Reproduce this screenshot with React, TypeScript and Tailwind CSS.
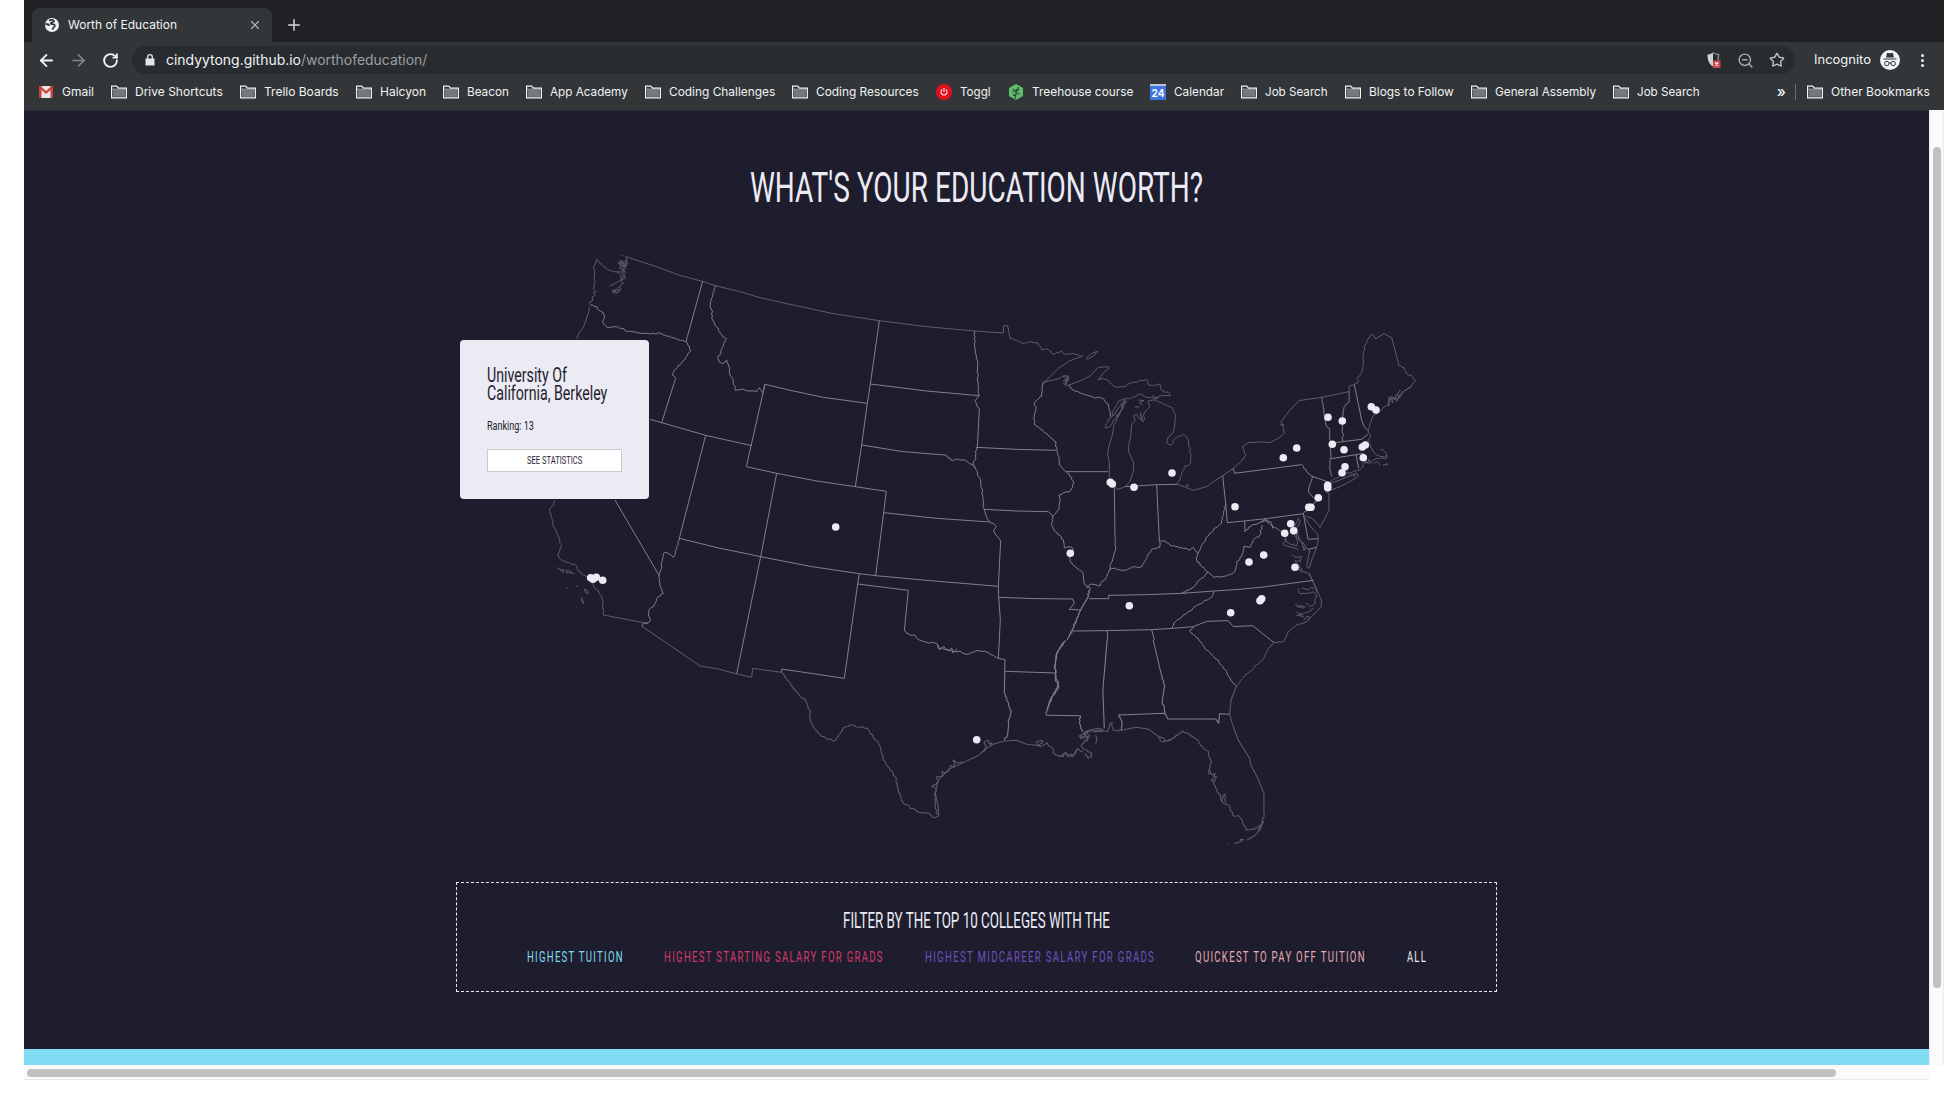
import { useLayoutEffect, useRef, useState, type ReactNode } from "react";
import { ArrowLeft, ArrowRight, Plus, RotateCw, Star, X, ZoomOut } from "lucide-react";

/** Single line of text whose glyphs are stretched to fill the width of its box. */
function FitText({ className, children }: { className: string; children: ReactNode }) {
  const box = useRef<HTMLSpanElement>(null);
  const text = useRef<HTMLSpanElement>(null);
  const [scale, setScale] = useState(1);
  useLayoutEffect(() => {
    if (box.current && text.current) {
      setScale(box.current.clientWidth / text.current.offsetWidth);
    }
  }, []);
  return (
    <span ref={box} className={"block shrink-0 whitespace-nowrap " + className}>
      <span ref={text} className="inline-block origin-left" style={{ transform: `scaleX(${scale})` }}>
        {children}
      </span>
    </span>
  );
}

/* ---------- Browser chrome ---------- */

function FolderIcon() {
  return (
    <svg width="16" height="14" viewBox="0 0 16 14" fill="none" className="shrink-0">
      <path d="M.6 12.9V1.1h5.2l1.600 2h8v9.800z" stroke="#f1f3f4" strokeWidth="1.200" />
      <path d="M2 5h12v6.800H2z" fill="#75797c" />
      <path d="M1 4.200h14" stroke="#c9cbcd" strokeWidth=".8" />
    </svg>
  );
}

function GmailIcon() {
  return (
    <svg width="16" height="14" viewBox="0 0 16 14" className="shrink-0">
      <path d="M1 1h14v12H1z" fill="#e8e6e6" />
      <path d="M1 1h2.500v12H1zM12.500 1H15v12h-2.500z" fill="#c5443c" />
      <path d="M1.800 1.800 8 7.500l6.200-5.700" fill="none" stroke="#d0453c" strokeWidth="2.300" />
    </svg>
  );
}

function TogglIcon() {
  return (
    <svg width="16" height="16" viewBox="0 0 16 16" className="shrink-0">
      <circle cx="8" cy="8" r="8" fill="#e01020" />
      <path d="M6.200 5.600a3 3 0 1 0 3.600 0M8 4v4" fill="none" stroke="#fbd5d8" strokeWidth="1.200" />
    </svg>
  );
}

function TreehouseIcon() {
  return (
    <svg width="16" height="16" viewBox="0 0 16 16" className="shrink-0">
      <path d="M8 0l7 4v8l-7 4-7-4V4z" fill="#5fbf6b" />
      <path d="M7 15l1-5-3 1.500M8 10l.5-5M8 8l3-3M10 6V3M8 9l4 1M5 5l3 3M4 8h2" fill="none" stroke="#2f4a38" strokeWidth="1.200" />
    </svg>
  );
}

function CalendarIcon() {
  return (
    <span className="flex h-4 w-4 shrink-0 items-center justify-center border-t-2 border-[#b9c4da] bg-[#3f74e0] text-[10px] leading-none font-bold text-white">
      24
    </span>
  );
}

const bookmarks: { icon: ReactNode; label: string; width: string }[] = [
  { icon: <GmailIcon />, label: "Gmail", width: "w-[32px]" },
  { icon: <FolderIcon />, label: "Drive Shortcuts", width: "w-[88px]" },
  { icon: <FolderIcon />, label: "Trello Boards", width: "w-[75px]" },
  { icon: <FolderIcon />, label: "Halcyon", width: "w-[46px]" },
  { icon: <FolderIcon />, label: "Beacon", width: "w-[42px]" },
  { icon: <FolderIcon />, label: "App Academy", width: "w-[78px]" },
  { icon: <FolderIcon />, label: "Coding Challenges", width: "w-[106px]" },
  { icon: <FolderIcon />, label: "Coding Resources", width: "w-[103px]" },
  { icon: <TogglIcon />, label: "Toggl", width: "w-[31px]" },
  { icon: <TreehouseIcon />, label: "Treehouse course", width: "w-[101px]" },
  { icon: <CalendarIcon />, label: "Calendar", width: "w-[50px]" },
  { icon: <FolderIcon />, label: "Job Search", width: "w-[63px]" },
  { icon: <FolderIcon />, label: "Blogs to Follow", width: "w-[85px]" },
  { icon: <FolderIcon />, label: "General Assembly", width: "w-[101px]" },
  { icon: <FolderIcon />, label: "Job Search", width: "w-[63px]" },
];

function TabStrip() {
  return (
    <div className="flex h-[42px] items-end bg-[#202124] pl-2">
      <div className="flex h-[34px] w-[240px] items-center rounded-t-lg bg-[#323639] pr-[10px] pl-[13px]">
        <svg width="14" height="14" viewBox="0 0 14 14" className="mr-[9px] shrink-0">
          <circle cx="7" cy="7" r="7" fill="#f1f3f4" />
          <path d="M4 2.500C6 1.500 9 1.500 9 3.200 9 4.500 6 3.500 5.800 5.200s3.500 0 4 2-2 1.800-2.300 4.500M.5 6c2 0 3.500.6 3.800 1.800" fill="none" stroke="#323639" strokeWidth="1.800" />
        </svg>
        <FitText className="w-[109px] text-[12px] leading-4 text-[#f1f3f4]">Worth of Education</FitText>
        <X size={14} strokeWidth={2} className="ml-auto text-[#b6b9bc]" />
      </div>
      <Plus size={18} strokeWidth={2} className="mb-2 ml-[13px] text-[#d5d7d9]" />
    </div>
  );
}

function Toolbar() {
  return (
    <div className="flex h-8 items-start bg-[#323639] pt-1">
      <div className="flex h-7 w-[108px] items-center pl-[13px]">
        <ArrowLeft size={19} strokeWidth={2.300} className="shrink-0 text-[#f1f3f4]" />
        <ArrowRight size={19} strokeWidth={2} className="ml-[13px] shrink-0 text-[#85898c]" />
        <RotateCw size={17} strokeWidth={2.700} className="ml-[14px] shrink-0 text-[#f1f3f4]" />
      </div>
      <div className="flex h-7 w-[1663px] items-center rounded-full bg-[#282c2f] pl-[13px]">
        <svg width="10" height="12" viewBox="0 0 10 12" className="mr-[11px] shrink-0">
          <path d="M.5 4.500h9v7h-9z" fill="#e3e5e7" />
          <path d="M2.700 5V3a2.300 2.300 0 0 1 4.600 0v2" fill="none" stroke="#e3e5e7" strokeWidth="1.300" />
        </svg>
        <FitText className="w-[261px] text-[14px] leading-5 text-[#9aa0a6]">
          <span className="text-[#f1f3f4]">cindyytong.github.io</span>/worthofeducation/
        </FitText>
        <div className="ml-auto flex items-center gap-[15px] pr-[10px]">
          <svg width="16" height="18" viewBox="0 0 16 18" className="ml-px">
            <path d="M7 1.500C5 3 3 3.500 1.500 3.500c0 6 1.500 9.500 5.500 12z" fill="#cfd1d3" />
            <path d="M7 1.500c2 1.500 4 2 5.500 2 0 2.500 0 4-.5 6" fill="none" stroke="#8f9396" strokeWidth="1.400" />
            <path d="M7 9.500h7.500V17H7z" fill="#d3454a" />
            <path d="M9.200 11.500l3 3m0-3l-3 3" stroke="#fff" strokeWidth="1.200" />
          </svg>
          <ZoomOut size={17} strokeWidth={2} className="text-[#a9acaf]" />
          <Star size={16} strokeWidth={2} className="text-[#c4c6c8]" />
        </div>
      </div>
      <div className="flex h-7 items-center pl-[19px] text-[#f1f3f4]">
        <FitText className="w-[57px] text-[12.500px] leading-5">Incognito</FitText>
        <svg width="20" height="20" viewBox="0 0 20 20" className="ml-[9px]">
          <circle cx="10" cy="10" r="10" fill="#f1f3f4" />
          <path d="M3.500 9h13M6.800 7l.8-3.500 2.400.6 2.400-.6.8 3.500z" fill="#323639" stroke="#323639" strokeWidth="1.200" />
          <circle cx="6.800" cy="13.500" r="2.200" fill="none" stroke="#323639" />
          <circle cx="13.200" cy="13.500" r="2.200" fill="none" stroke="#323639" />
          <path d="M9 13.200h2" stroke="#323639" />
        </svg>
        <span className="ml-[21px] flex flex-col gap-[2px]">
          <span className="h-[3px] w-[3px] rounded-full bg-[#f1f3f4]" />
          <span className="h-[3px] w-[3px] rounded-full bg-[#f1f3f4]" />
          <span className="h-[3px] w-[3px] rounded-full bg-[#f1f3f4]" />
        </span>
      </div>
    </div>
  );
}

function BookmarksBar() {
  return (
    <div className="flex h-9 items-center gap-[17px] bg-[#323639] pl-[14px] text-[12px] leading-4 text-[#f1f3f4]">
      {bookmarks.map((b, i) => (
        <div key={i} className="flex items-center gap-2">
          {b.icon}
          <FitText className={b.width}>{b.label}</FitText>
        </div>
      ))}
      <div className="ml-auto flex items-center pr-[14px]">
        <span className="mr-[9px] text-[15px] font-medium">»</span>
        <span className="mr-[11px] h-4 w-px bg-[#6a6e71]" />
        <FolderIcon />
        <FitText className="ml-2 w-[99px]">Other Bookmarks</FitText>
      </div>
    </div>
  );
}

/* ---------- Map ---------- */

/** Turns "x y x y ..." into a path that wanders around each segment like a river bank. */
function meander(source: string, amplitude: number): string {
  const n = source.trim().split(/\s+/).map(Number);
  let d = `M${n[0]} ${n[1]}`;
  let seed = 3;
  for (let i = 2; i < n.length; i += 2) {
    const [x0, y0, x1, y1] = [n[i - 2], n[i - 1], n[i], n[i + 1]];
    const length = Math.hypot(x1 - x0, y1 - y0) || 1;
    const steps = Math.max(1, Math.round(length / 6));
    for (let s = 1; s <= steps; s++) {
      seed = (seed * 73 + 41) % 1009;
      const offset = s === steps ? 0 : (seed / 1009 - 0.5) * 2 * amplitude;
      const x = x0 + ((x1 - x0) * s) / steps + ((y0 - y1) / length) * offset;
      const y = y0 + ((y1 - y0) * s) / steps + ((x1 - x0) / length) * offset;
      d += `L${x.toFixed(1)} ${y.toFixed(1)}`;
    }
  }
  return d;
}

type Region = { transform: string; coast: string; wildCoast: string[]; borders: string; rivers: string[] };

const regions: Region[] = [
  {
    // West
    transform: "translate(440 240) scale(.33333)",
    coast:
      "M545 45l4 2M562 72L558 50 640 77 720 106 786 124 826 137 900 155M448 200L446 215 438 240 430 262 418 278 410 297M490 1125L610 1148 625 1148M607 1160L700 1223 780 1278 835 1287 890 1302M350 983L360 988 370 998 372 990 360 989M378 993L385 990 398 999 380 998ZM400 1000L405 1002M380 1042L385 1048M408 1038l5 2M433 1047L443 1053 445 1061 437 1058ZM424 1073L432 1090 427 1088Z",
    wildCoast: [
      "452 195 450 185 458 182 456 172 463 168 460 158 468 155 460 147 463 130 464 100 461 85 470 58",
      "470 58 485 75 500 86 515 92 530 96 540 100",
      "343 780 342 795 330 805 331 820 340 845 342 862 356 890 358 908 365 915 357 938 356 950 362 958 385 967 408 976 415 990 425 1002 440 1010 455 1028 462 1040 475 1052 488 1080 490 1110 490 1125",
      "530 96 548 95 538 85 545 75 535 70 540 62 553 64 560 60 563 72 552 78 558 85 548 92 557 98 550 105 556 115 545 118 550 130 540 138 543 150 530 158 520 160 518 150 530 148 536 140",
      "540 66 548 72 556 68 560 78 546 84 554 92 548 100 542 108 548 120",
      "536 72 546 66 552 76 542 80 536 70 550 70 558 76 550 82",
      "510 140 522 130 538 124 546 112 556 104",
      "518 156 526 150 538 152 532 160 522 154",
    ],
    borders:
      "M788 124L742 290 738 306M702 430L665 548M968 458L975 433M630 538L665 548 797 586 935 617M797 586L718 895M525 780L657 1006M718 895L840 925 900 937",
    rivers: [
      "452 195 470 200 478 212 490 218 494 232 488 245 495 256 508 263 530 260 545 265 560 274 585 275 620 280 660 280 700 294 738 306",
      "738 306 748 318 752 332 735 358 720 375 703 390 697 405 708 415 702 430",
      "826 137 810 198 818 215 815 235 830 262 848 290 860 297 850 318 840 345 833 355 838 366 850 370 860 360 868 385 870 405 880 422 887 452 905 448 930 453 950 455 958 444 968 458",
      "718 895 705 945 700 952 685 940 670 940 667 960 662 990 657 1006 660 1030 670 1060 650 1075 642 1098 628 1108 625 1125 632 1140 622 1150 610 1150 607 1160",
    ],
  },
  {
    // Plains
    transform: "translate(740 290) scale(.33333)",
    coast:
      "M0 5L60 23 150 43 280 71 418 92 560 110 703 123 790 129 791 107 803 107 810 146M1028 198L990 212 955 235 915 275M-10 1152L35 1162 38 1135 125 1147",
    wildCoast: ["810 146 830 150 848 160 870 154 895 160 905 180 920 176 940 193 965 183 972 191 1000 190 1028 198"],
    borders:
      "M418 92L391 282 382 340 365 465 346 590M75 283L160 303 250 322 382 340M75 283L19 530 110 550 230 573 346 590 439 604M391 282L560 303 717 317M365 465L490 485 615 495M110 550L62 800-10 1152M439 604L407 857M430 668L590 685 750 696M0 787L62 800 210 829 358 851 407 857 560 871 775 889M707 472L830 478 950 481M733 658L830 663 925 665 938 678M718 355L712 472M782 752L775 889 776 920 781 990 775 1105M358 851L353 882 313 1165 125 1137 125 1147M353 882L505 901 493 1022M775 1105L795 1109M776 922L890 926 998 927 1003 940 988 958 1020 960M978 545L1105 545M795 1144L945 1149",
    rivers: [
      "615 495 638 512 650 507 675 510 695 523 705 533",
      "703 123 706 180 712 210 713 270 718 317 705 335 718 355",
      "712 472 706 485 708 505 700 520 712 545 722 575 728 620 733 658 745 690 770 710 760 725 782 752",
      "915 275 907 282 906 318 883 338 888 350 883 375 882 402 920 430 948 455 950 481 957 500 958 525 978 545 995 562 1000 580 992 602 957 615 960 632 955 660 938 678 935 700 940 715 970 750 975 775 990 770 1000 780 990 800 990 815 1030 850 1035 885 1050 893",
      "493 1022 510 1036 525 1035 535 1048 560 1057 590 1060 600 1075 625 1080 640 1083 660 1083 678 1093 705 1084 735 1083 755 1095 775 1105",
      "590 1060 598 1078 612 1070 626 1082 636 1074 638 1088 650 1076",
    ],
  },
  {
    // Great Lakes and Ohio valley
    transform: "translate(980 310) scale(.33333)",
    coast:
      "M188 217L215 211 240 205M265 226L300 213 330 198 355 172 385 170 388 174 370 188 355 210M318 145L335 130 352 124 340 138 322 148ZM435 275L420 310 402 345 397 375 388 405 383 430 388 460 388 500 400 530 415 538 435 530 450 515 461 480 460 455 445 425 447 400 452 380 455 345M475 270L492 272 478 278 488 285M465 292L478 290M592 523L620 533 640 541 680 530 700 515 728 497M620 530l2-8 3 8",
    wildCoast: [
      "240 205 250 198 265 198 262 215 250 222 265 226",
      "248 200 262 205 250 212 268 206 256 224 262 196",
      "355 210 370 204 385 212 405 230 430 230 460 217 500 209 507 225 540 222 545 240 570 250 570 258 545 257 520 265 500 262 485 252 455 263 430 268 415 275 400 300 395 322",
      "392 320 380 340 375 353 390 350 400 330 415 315 430 290 440 272",
      "400 318 412 300 424 280 436 268 424 300 408 322",
      "455 345 465 330 460 318 470 312 478 325 490 335 492 312 500 300 510 290 505 272 525 270 545 278 575 292 587 312 585 345 578 370 562 385 562 400 575 405 585 385 610 373 622 385 632 430 630 462 615 468 605 495 592 523",
      "480 312 486 330 482 308",
      "515 258 535 264 525 270",
    ],
    borders:
      "M435 530L530 524 592 523M530 524L538 692M403 535L405 680M328 866L386 866 386 856 500 854 605 850 703 843 780 838M278 963L380 962 515 959 578 955 640 950M380 962L383 975 382 990M515 959L523 990M640 950L680 934 745 932 760 950 818 947 882 998M728 497L737 580 742 638",
    rivers: [
      "265 226 280 240 330 258 370 266 385 285 390 305 392 320",
      "405 680 407 720 398 750 388 780 380 800 362 820 360 828 335 822 320 835",
      "388 780 400 775 430 782 460 770 485 770 500 745 515 718 538 712 538 692 555 692 575 708 605 713 630 720 640 712 652 730 650 750 665 770 685 787",
      "330 833 325 860 300 905 275 960 262 990",
      "327 840 322 866 303 900 278 958 266 984",
      "578 955 580 940 610 915 650 887 695 862 703 843",
      "605 850 640 832 655 812 685 787 705 802 740 798 765 783 770 755 785 740 792 708 810 712 820 690 840 675 847 645",
      "640 950 630 965 655 985 680 1020 710 1048 740 1085 760 1120 770 1128",
      "737 580 725 640 690 670 668 700 655 730",
    ],
  },
  {
    // Atlantic seaboard
    transform: "translate(1180 310) scale(.33333)",
    coast:
      "M128 497L160 475 185 453 197 435 187 410 205 398 240 396 270 398 295 385 313 370 310 352 302 342 312 346 303 338 305 333 330 300 357 272 425 262 507 245 508 228 523 224M572 73L580 75 586 87 612 71 635 83 645 120 657 167M436 545L447 550 447 600 435 625 420 652 412 640 395 625 380 618M452 520L480 510 510 497 530 490 536 498 515 512 480 530 445 543M370 612L385 640 400 660 413 672 415 690 410 712 395 750 388 775 380 770 385 740 390 720M385 790L400 815 415 850 424 870 424 890 400 915 378 937 350 945 325 965 312 995 282 998M388 790L405 830 412 850",
    wildCoast: [
      "523 224 535 215 530 205 545 188 550 155 550 125 560 95 572 73",
      "657 167 672 172 680 192 695 196 707 213 695 228 670 245 655 265 640 265 628 275 630 285 615 290 600 303 582 315 570 340 565 365 572 380 563 390",
      "695 228 680 240 665 248 658 262 648 254 645 270 632 258 640 278 626 262 625 285",
      "660 240 652 256 662 258 650 274 640 262 628 268",
      "563 390 568 400 580 425 595 437 615 440 620 430 608 418 600 420",
      "620 435 620 445 590 445 570 460 555 457 548 470 538 480 500 490 470 505 452 515",
      "555 445 560 460 566 448 572 458",
      "580 462 592 456 600 466",
      "608 466 622 464 618 458",
      "513 498 530 490 522 500",
      "390 720 370 712 365 695 350 680 345 650 355 625 360 632 350 655 358 690 372 700",
      "368 700 380 712 372 722 366 708",
      "315 675 320 690 308 702 330 710 350 715 355 722",
      "312 688 328 700 350 708 352 692 342 672",
      "335 735 350 742 364 738 362 756 345 752 358 766 366 780 345 778 370 785 385 790",
      "365 835 385 838 395 830 402 838",
      "355 835 358 850 380 850 400 845 410 855 405 880 390 890 378 880",
      "345 885 375 890 370 895 350 890",
      "350 908 365 912 370 920 350 916 385 905 400 895",
      "372 930 380 920 390 922 376 937",
      "282 998 265 1015 252 1045 235 1062 190 1102 170 1128",
    ],
    borders:
      "M160 475L163 490 365 464M400 500L450 518M142 638L250 627 370 611 384 688 415 686M385 718l24-6M451 400L488 395 545 388 563 373M523 224L545 330 552 350 565 362M453 446L528 434 550 430 556 440M528 434L536 475M194 633L195 665M180 838L250 831 400 811",
    rivers: [
      "365 464 385 490 400 500 388 530 388 550 400 563 413 565 395 590 370 610",
      "425 262 432 300 438 345 448 355 453 440 450 480 456 500",
      "507 245 508 275 492 292 487 340 488 395",
      "195 665 215 645 240 638 255 628 272 635 278 655",
      "240 638 258 630 272 645 290 655 305 665",
    ],
  },
  {
    // Gulf coast and Florida
    transform: "translate(740 640) scale(.35714 .33333)",
    coast:
      "M557 527L555 500 547 460 555 420 585 388 625 368 665 348 690 325 710 312 740 303 775 301 800 312 838 317M1068 271L1110 262 1145 268 1172 290M1467 520L1467 460 1450 415 1430 375 1427 355 1395 300 1378 250 1371 222 1375 180 1390 138M1466 543L1455 570 1440 588 1420 600M1462 548L1450 575M1412 600L1400 598 1404 604 1383 611M1365 612L1368 612M996 285l3 14-3 12M965 275l50-5M990 276l30-2",
    wildCoast: [
      "118 98 130 115 155 150 185 185 195 210 197 245 225 285 262 304 275 290 292 262 312 255 355 265 388 310 400 350 410 375 438 415 443 450 457 490 500 517 530 520 543 534 557 527",
      "553 524 547 500 544 462 550 448 537 440 550 432 556 418 550 410 568 408 565 394 580 396 590 376 600 380 596 360 606 368 624 366",
      "675 340 690 324 683 306 695 300 698 312 706 308 700 320",
      "838 317 848 302 830 305 840 320 860 308 878 330 876 338 895 350 910 338 930 350 945 325 960 335",
      "895 348 905 350 912 338 918 350 926 342 934 346 940 330",
      "955 318 960 325 985 340 985 350 975 355 965 340",
      "955 318 975 290 955 297 950 288 965 278 980 270 1000 265 1030 275 1036 250 1042 248 1045 270 1068 271",
      "950 288 962 292 970 284 960 280 972 276 980 288 970 306",
      "1172 290 1180 305 1200 302 1240 273 1275 295 1300 328 1312 335 1320 365 1312 400 1335 410 1325 428 1340 460 1355 490 1368 495 1382 528 1398 528 1418 570 1440 568 1460 555 1467 520",
      "1172 292 1185 294 1190 304 1205 298 1225 284",
      "1314 390 1322 404 1330 400 1324 424 1318 418",
      "1350 486 1352 466 1358 462 1360 490",
    ],
    borders:
      "M742 60L740 158M858 226L953 227M1028 0L1016 150 1020 265M1157 0L1180 105M1190 220L1060 225 1070 245 1068 271M1190 220L1198 237 1332 237 1340 250 1343 221 1371 223",
    rivers: [
      "740 158 750 185 760 215 752 250 750 280 740 300",
      "912 0 890 35 882 75 885 110 893 140 872 180 860 210 858 226",
      "908 4 887 38 884 75 882 108 889 140 870 178 862 210",
      "953 227 950 248 960 275",
      "1180 105 1190 140 1183 180 1190 220",
    ],
  },
];

const colleges: [number, number][] = [
  [590.7, 577.7], [593, 579.3], [596.3, 577.3], [602.7, 580.3], [835.7, 527], [1070.3, 553.3],
  [1110.3, 482.3], [1112.3, 484], [1134, 487.3], [1172, 473], [1129.3, 605.7], [1230.7, 612.7],
  [1235, 506.7], [1283.3, 457.7], [1296.7, 448], [1328, 417.3], [1342.3, 421], [1332.3, 444.3],
  [1344, 449.7], [1371.3, 406.7], [1376, 410], [1365.3, 445], [1362.3, 447], [1363.3, 457.7],
  [1345, 466.7], [1342, 472.7], [1327.7, 485.3], [1327.7, 487.7], [1318.3, 497.7], [1308.7, 507.3],
  [1311, 507.3], [1290.7, 523.7], [1293.7, 530.7], [1284.7, 533.3], [1249, 562], [1263.7, 555],
  [1295, 567.3], [1260, 600.7], [1261.7, 598.7], [976.7, 739.7],
];

function CollegeMap() {
  return (
    <svg width="1041" height="620" viewBox="456 240 1041 620" fill="none" className="block">
      {regions.map((r) => (
        <g key={r.transform} transform={r.transform}>
          <g stroke="#5d5c69" strokeWidth="3" strokeLinejoin="round">
            <path d={r.coast} />
            {r.wildCoast.map((s, i) => <path key={i} d={meander(s, 2.5)} />)}
          </g>
          <g stroke="#81808c" strokeWidth="3" strokeLinejoin="round">
            <path d={r.borders} />
            {r.rivers.map((s, i) => <path key={i} d={meander(s, 2.5)} />)}
          </g>
        </g>
      ))}
      {colleges.map(([x, y], i) => (
        <circle key={i} cx={x} cy={y} r="3.800" fill="#ecebf4" />
      ))}
    </svg>
  );
}

function CollegeCard() {
  return (
    <div className="absolute top-[100px] left-1 flex h-[159px] w-[189px] flex-col rounded bg-[#ecebf4] px-[27px] pt-[27px] text-[#1e1d2d]">
      <FitText className="h-[18px] w-[80px] text-[19.500px] leading-[18px]">University Of</FitText>
      <FitText className="h-[18px] w-[120px] text-[19.500px] leading-[18px]">California, Berkeley</FitText>
      <FitText className="mt-[15px] h-4 w-[47px] text-[12.500px] leading-4">Ranking: 13</FitText>
      <button className="mt-[15px] flex h-[23px] w-[135px] shrink-0 items-center justify-center border border-[#c9c9d2] bg-white">
        <FitText className="w-[55px] text-[11px] leading-4">SEE STATISTICS</FitText>
      </button>
    </div>
  );
}

const filters = [
  { label: "HIGHEST TUITION", style: "w-[97px] text-[#7edcf2]" },
  { label: "HIGHEST STARTING SALARY FOR GRADS", style: "w-[220px] text-[#d13b6b]" },
  { label: "HIGHEST MIDCAREER SALARY FOR GRADS", style: "w-[230px] text-[#6c52bd]" },
  { label: "QUICKEST TO PAY OFF TUITION", style: "w-[171px] text-[#e6a9b6]" },
  { label: "ALL", style: "w-[20px] text-[#ecebf4]" },
];

function Filters() {
  return (
    <section className="mt-[22px] flex h-[110px] w-[1041px] flex-col items-center border border-dashed border-[#ecebf4] pt-6">
      <FitText className="h-7 w-[267px] text-[21.500px] leading-7 text-[#ecebf4]">
        FILTER BY THE TOP 10 COLLEGES WITH THE
      </FitText>
      <nav className="mt-3 flex gap-[40.500px]">
        {filters.map((f) => (
          <FitText key={f.label} className={"text-[15px] leading-5 tracking-[2px] " + f.style}>
            {f.label}
          </FitText>
        ))}
      </nav>
    </section>
  );
}

export default function App() {
  return (
    <div className="h-[1108px] w-[1944px] overflow-hidden bg-white pl-6 font-['Inter',sans-serif]">
      <TabStrip />
      <Toolbar />
      <BookmarksBar />
      <div className="flex h-[955px]">
        <div className="flex w-[1905px] flex-col">
          <main className="flex h-[939px] flex-col items-center border-t border-[#2b2a35] bg-[#1e1d2d] font-['Roboto',sans-serif]">
            <h1 className="mt-[51px] h-[50px] text-[#ecebf4]">
              <FitText className="w-[453px] text-[43px] leading-[50px] font-normal">WHAT'S YOUR EDUCATION WORTH?</FitText>
            </h1>
            <div className="relative mt-7">
              <CollegeMap />
              <CollegeCard />
            </div>
            <Filters />
          </main>
          <div className="h-4 bg-[#7fdcf2]" />
        </div>
        <div className="w-[15px] border-x border-[#ececec] bg-[#fafafa] pt-[37px] pl-[3px]">
          <div className="h-[841px] w-2 rounded-full bg-[#c1c1c1]" />
        </div>
      </div>
      <div className="h-[15px] w-[1905px] border-b border-[#e8e8e8] bg-[#fafafa] pt-1 pl-[3px]">
        <div className="h-2 w-[1809px] rounded-full bg-[#c1c1c1]" />
      </div>
    </div>
  );
}
